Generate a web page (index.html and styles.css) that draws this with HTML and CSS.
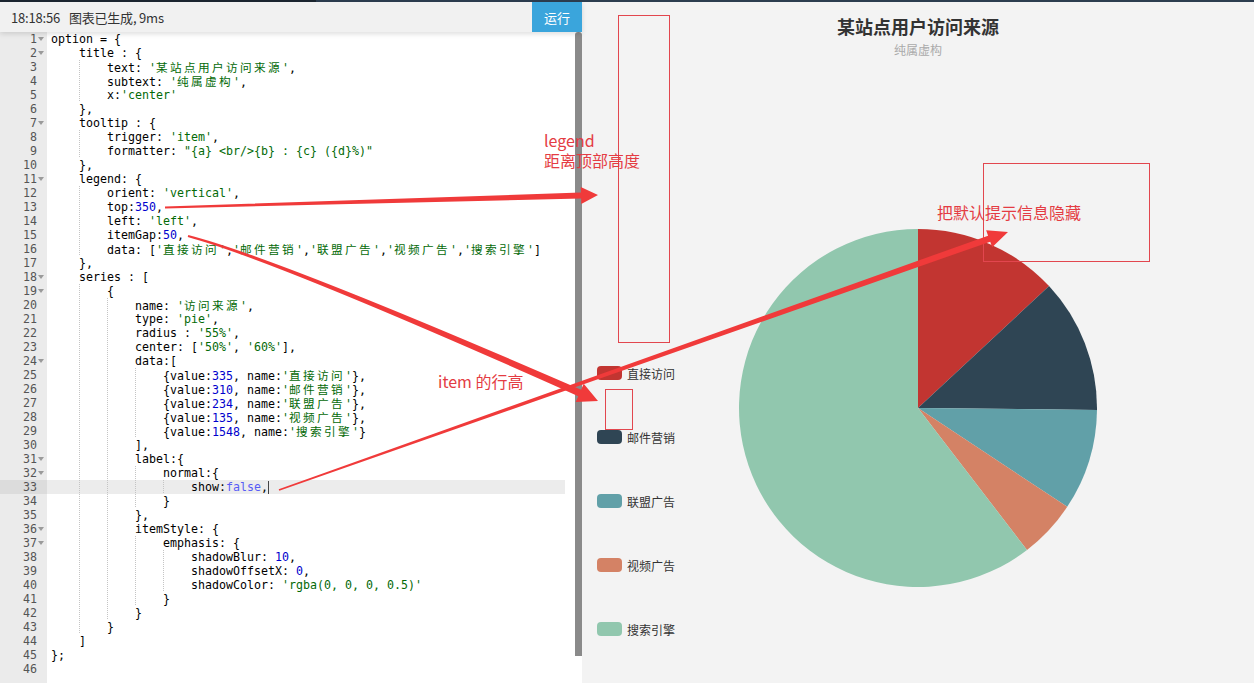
FILE: index.html
```html
<!DOCTYPE html>
<html lang="zh-CN">
<head>
<meta charset="utf-8">
<title>ECharts 饼图示例</title>
<link rel="stylesheet" href="styles.css">
</head>
<body>
<div class="page">
  <div class="topbar"></div>
  <div class="main">
    <section class="editor">
      <header class="ed-head">
        <span class="status"><span>18:18:56</span><span class="msg">图表已生成, 9ms</span></span>
        <button class="run">运行</button>
      </header>
      <div class="ed-body">
        <div class="gutter">
          <div class="gr"><span class="num">1</span><span class="fold on"></span></div>
          <div class="gr"><span class="num">2</span><span class="fold on"></span></div>
          <div class="gr"><span class="num">3</span><span class="fold"></span></div>
          <div class="gr"><span class="num">4</span><span class="fold"></span></div>
          <div class="gr"><span class="num">5</span><span class="fold"></span></div>
          <div class="gr"><span class="num">6</span><span class="fold"></span></div>
          <div class="gr"><span class="num">7</span><span class="fold on"></span></div>
          <div class="gr"><span class="num">8</span><span class="fold"></span></div>
          <div class="gr"><span class="num">9</span><span class="fold"></span></div>
          <div class="gr"><span class="num">10</span><span class="fold"></span></div>
          <div class="gr"><span class="num">11</span><span class="fold on"></span></div>
          <div class="gr"><span class="num">12</span><span class="fold"></span></div>
          <div class="gr"><span class="num">13</span><span class="fold"></span></div>
          <div class="gr"><span class="num">14</span><span class="fold"></span></div>
          <div class="gr"><span class="num">15</span><span class="fold"></span></div>
          <div class="gr"><span class="num">16</span><span class="fold"></span></div>
          <div class="gr"><span class="num">17</span><span class="fold"></span></div>
          <div class="gr"><span class="num">18</span><span class="fold on"></span></div>
          <div class="gr"><span class="num">19</span><span class="fold on"></span></div>
          <div class="gr"><span class="num">20</span><span class="fold"></span></div>
          <div class="gr"><span class="num">21</span><span class="fold"></span></div>
          <div class="gr"><span class="num">22</span><span class="fold"></span></div>
          <div class="gr"><span class="num">23</span><span class="fold"></span></div>
          <div class="gr"><span class="num">24</span><span class="fold on"></span></div>
          <div class="gr"><span class="num">25</span><span class="fold"></span></div>
          <div class="gr"><span class="num">26</span><span class="fold"></span></div>
          <div class="gr"><span class="num">27</span><span class="fold"></span></div>
          <div class="gr"><span class="num">28</span><span class="fold"></span></div>
          <div class="gr"><span class="num">29</span><span class="fold"></span></div>
          <div class="gr"><span class="num">30</span><span class="fold"></span></div>
          <div class="gr"><span class="num">31</span><span class="fold on"></span></div>
          <div class="gr"><span class="num">32</span><span class="fold on"></span></div>
          <div class="gr active"><span class="num">33</span><span class="fold"></span></div>
          <div class="gr"><span class="num">34</span><span class="fold"></span></div>
          <div class="gr"><span class="num">35</span><span class="fold"></span></div>
          <div class="gr"><span class="num">36</span><span class="fold on"></span></div>
          <div class="gr"><span class="num">37</span><span class="fold on"></span></div>
          <div class="gr"><span class="num">38</span><span class="fold"></span></div>
          <div class="gr"><span class="num">39</span><span class="fold"></span></div>
          <div class="gr"><span class="num">40</span><span class="fold"></span></div>
          <div class="gr"><span class="num">41</span><span class="fold"></span></div>
          <div class="gr"><span class="num">42</span><span class="fold"></span></div>
          <div class="gr"><span class="num">43</span><span class="fold"></span></div>
          <div class="gr"><span class="num">44</span><span class="fold"></span></div>
          <div class="gr"><span class="num">45</span><span class="fold"></span></div>
          <div class="gr"><span class="num">46</span><span class="fold"></span></div>
        </div>
        <div class="code">
          <div class="ln"><span class="t">option = {</span></div>
          <div class="ln"><i></i><span class="t">title : {</span></div>
          <div class="ln"><i></i><i class="g"></i><span class="t">text: <span class="s">'<span class="c">某站点用户访问来源</span>'</span>,</span></div>
          <div class="ln"><i></i><i class="g"></i><span class="t">subtext: <span class="s">'<span class="c">纯属虚构</span>'</span>,</span></div>
          <div class="ln"><i></i><i class="g"></i><span class="t">x:<span class="s">'center'</span></span></div>
          <div class="ln"><i></i><span class="t">},</span></div>
          <div class="ln"><i></i><span class="t">tooltip : {</span></div>
          <div class="ln"><i></i><i class="g"></i><span class="t">trigger: <span class="s">'item'</span>,</span></div>
          <div class="ln"><i></i><i class="g"></i><span class="t">formatter: <span class="s">"{a} &lt;br/&gt;{b} : {c} ({d}%)"</span></span></div>
          <div class="ln"><i></i><span class="t">},</span></div>
          <div class="ln"><i></i><span class="t">legend: {</span></div>
          <div class="ln"><i></i><i class="g"></i><span class="t">orient: <span class="s">'vertical'</span>,</span></div>
          <div class="ln"><i></i><i class="g"></i><span class="t">top:<span class="n">350</span>,</span></div>
          <div class="ln"><i></i><i class="g"></i><span class="t">left: <span class="s">'left'</span>,</span></div>
          <div class="ln"><i></i><i class="g"></i><span class="t">itemGap:<span class="n">50</span>,</span></div>
          <div class="ln"><i></i><i class="g"></i><span class="t">data: [<span class="s">'<span class="c">直接访问</span>'</span>,<span class="s">'<span class="c">邮件营销</span>'</span>,<span class="s">'<span class="c">联盟广告</span>'</span>,<span class="s">'<span class="c">视频广告</span>'</span>,<span class="s">'<span class="c">搜索引擎</span>'</span>]</span></div>
          <div class="ln"><i></i><span class="t">},</span></div>
          <div class="ln"><i></i><span class="t">series : [</span></div>
          <div class="ln"><i></i><i class="g"></i><span class="t">{</span></div>
          <div class="ln"><i></i><i class="g"></i><i class="g"></i><span class="t">name: <span class="s">'<span class="c">访问来源</span>'</span>,</span></div>
          <div class="ln"><i></i><i class="g"></i><i class="g"></i><span class="t">type: <span class="s">'pie'</span>,</span></div>
          <div class="ln"><i></i><i class="g"></i><i class="g"></i><span class="t">radius : <span class="s">'55%'</span>,</span></div>
          <div class="ln"><i></i><i class="g"></i><i class="g"></i><span class="t">center: [<span class="s">'50%'</span>, <span class="s">'60%'</span>],</span></div>
          <div class="ln"><i></i><i class="g"></i><i class="g"></i><span class="t">data:[</span></div>
          <div class="ln"><i></i><i class="g"></i><i class="g"></i><i class="g"></i><span class="t">{value:<span class="n">335</span>, name:<span class="s">'<span class="c">直接访问</span>'</span>},</span></div>
          <div class="ln"><i></i><i class="g"></i><i class="g"></i><i class="g"></i><span class="t">{value:<span class="n">310</span>, name:<span class="s">'<span class="c">邮件营销</span>'</span>},</span></div>
          <div class="ln"><i></i><i class="g"></i><i class="g"></i><i class="g"></i><span class="t">{value:<span class="n">234</span>, name:<span class="s">'<span class="c">联盟广告</span>'</span>},</span></div>
          <div class="ln"><i></i><i class="g"></i><i class="g"></i><i class="g"></i><span class="t">{value:<span class="n">135</span>, name:<span class="s">'<span class="c">视频广告</span>'</span>},</span></div>
          <div class="ln"><i></i><i class="g"></i><i class="g"></i><i class="g"></i><span class="t">{value:<span class="n">1548</span>, name:<span class="s">'<span class="c">搜索引擎</span>'</span>}</span></div>
          <div class="ln"><i></i><i class="g"></i><i class="g"></i><span class="t">],</span></div>
          <div class="ln"><i></i><i class="g"></i><i class="g"></i><span class="t">label:{</span></div>
          <div class="ln"><i></i><i class="g"></i><i class="g"></i><i class="g"></i><span class="t">normal:{</span></div>
          <div class="ln active"><i></i><i class="g"></i><i class="g"></i><i class="g"></i><i class="g"></i><span class="t">show:<span class="b">false</span>,</span><span class="cursor"></span></div>
          <div class="ln"><i></i><i class="g"></i><i class="g"></i><i class="g"></i><span class="t">}</span></div>
          <div class="ln"><i></i><i class="g"></i><i class="g"></i><span class="t">},</span></div>
          <div class="ln"><i></i><i class="g"></i><i class="g"></i><span class="t">itemStyle: {</span></div>
          <div class="ln"><i></i><i class="g"></i><i class="g"></i><i class="g"></i><span class="t">emphasis: {</span></div>
          <div class="ln"><i></i><i class="g"></i><i class="g"></i><i class="g"></i><i class="g"></i><span class="t">shadowBlur: <span class="n">10</span>,</span></div>
          <div class="ln"><i></i><i class="g"></i><i class="g"></i><i class="g"></i><i class="g"></i><span class="t">shadowOffsetX: <span class="n">0</span>,</span></div>
          <div class="ln"><i></i><i class="g"></i><i class="g"></i><i class="g"></i><i class="g"></i><span class="t">shadowColor: <span class="s">'rgba(0, 0, 0, 0.5)'</span></span></div>
          <div class="ln"><i></i><i class="g"></i><i class="g"></i><i class="g"></i><span class="t">}</span></div>
          <div class="ln"><i></i><i class="g"></i><i class="g"></i><span class="t">}</span></div>
          <div class="ln"><i></i><i class="g"></i><span class="t">}</span></div>
          <div class="ln"><i></i><span class="t">]</span></div>
          <div class="ln"><span class="t">};</span></div>
          <div class="ln"><span class="t"></span></div>
        </div>
        <div class="vscroll"><div class="thumb"></div></div>
      </div>
    </section>

    <section class="chart">
      <svg class="pie" viewBox="0 0 672 681" width="672" height="681">
        <path d="M336 406 L336 227 A179 179 0 0 1 467.06 284.08 Z" fill="#c23531"/>
        <path d="M336 406 L467.06 284.08 A179 179 0 0 1 514.99 407.97 Z" fill="#2f4554"/>
        <path d="M336 406 L514.99 407.97 A179 179 0 0 1 485.25 504.84 Z" fill="#61a0a8"/>
        <path d="M336 406 L485.25 504.84 A179 179 0 0 1 445.01 547.98 Z" fill="#d48265"/>
        <path d="M336 406 L445.01 547.98 A179 179 0 1 1 336 227 Z" fill="#91c7ae"/>
      </svg>
      <div class="chart-head">
        <div class="chart-title">某站点用户访问来源</div>
        <div class="chart-sub">纯属虚构</div>
      </div>
      <ul class="legend">
        <li><span class="swatch sw1"></span>直接访问</li>
        <li><span class="swatch sw2"></span>邮件营销</li>
        <li><span class="swatch sw3"></span>联盟广告</li>
        <li><span class="swatch sw4"></span>视频广告</li>
        <li><span class="swatch sw5"></span>搜索引擎</li>
      </ul>
    </section>
  </div>

  <svg class="annot" viewBox="0 0 1254 683" width="1254" height="683">
    <g fill="none" stroke="#e2464e" stroke-width="1">
      <rect x="618.5" y="15.5" width="51" height="327"/>
      <rect x="605.5" y="389.5" width="27" height="40"/>
      <rect x="983.5" y="163.5" width="166" height="98"/>
    </g>
    <g fill="#f03a3a">
      <polygon points="164.97,206.5 580.92,192.49 580.76,186.99 598,195 581.26,203.99 581.1,198.49 165.03,208.5"/>
      <path d="M188.26 235.03 Q278.63 258.31 581.11 389.74 L583.73 383.79 L598 401 L575.67 402.09 L578.29 396.14 Q277.37 261.69 187.74 236.97 Z"/>
      <polygon points="278.7,489.15 988.08,235.65 986.15,230.19 1008,232 992.15,247.15 990.22,241.69 279.3,490.85"/>
    </g>
  </svg>
  <div class="note n-legend">legend<br>距离顶部高度</div>
  <div class="note n-item">item 的行高</div>
  <div class="note n-tip">把默认提示信息隐藏</div>
</div>
</body>
</html>
```

FILE: styles.css
```css
* { box-sizing: border-box; }
html, body { margin: 0; padding: 0; }
body {
  width: 1254px;
  height: 683px;
  overflow: hidden;
  background: #f3f3f3;
  font-family: "Noto Sans CJK SC", "Noto Sans", sans-serif;
}
.page {
  position: relative;
  width: 1254px;
  height: 683px;
  display: flex;
  flex-direction: column;
}
.topbar {
  flex: none;
  height: 2px;
  background: linear-gradient(to right, #1c2630 0, #1c2630 316px, #2c3d4f 316px);
}
.main {
  flex: 1;
  display: flex;
  min-height: 0;
}

/* ---------- editor ---------- */
.editor {
  width: 582px;
  flex: none;
  display: flex;
  flex-direction: column;
  background: #fff;
}
.ed-head {
  flex: none;
  height: 30px;
  display: flex;
  align-items: center;
  padding-left: 11px;
  background: #f1f1f1;
  position: relative;
  z-index: 2;
  box-shadow: 0 2px 5px rgba(0, 0, 0, 0.13);
}
.status {
  font-size: 13px;
  color: #333;
  letter-spacing: -0.2px;
}
.status .msg { margin-left: 9px; }
.run {
  margin-left: auto;
  width: 50px;
  height: 30px;
  padding: 0;
  border: 0;
  background: #3aa5dc;
  color: #fff;
  font: 13px "Noto Sans CJK SC", sans-serif;
}
.ed-body {
  flex: 1;
  display: flex;
  min-height: 0;
}
.gutter {
  width: 47px;
  flex: none;
  background: #ebebeb;
}
.gr {
  height: 14px;
  display: flex;
  align-items: center;
  font: 11.63px/14px "DejaVu Sans Mono", monospace;
  color: #555;
}
.gr.active { background: #dcdcdc; }
.gr .num {
  width: 37px;
  text-align: right;
}
.gr .fold {
  width: 10px;
  height: 14px;
  display: flex;
  align-items: center;
}
.gr .fold.on::before {
  content: "";
  display: block;
  margin-left: 1px;
  margin-top: -1px;
  border-left: 3px solid transparent;
  border-right: 3px solid transparent;
  border-top: 4px solid #9a9a9a;
}
.code {
  flex: 1;
  min-width: 0;
}
.ln {
  height: 14px;
  margin-right: 10px;
  padding-left: 4px;
  display: flex;
  align-items: stretch;
  font: 11.63px/14px "DejaVu Sans Mono", "Noto Sans CJK SC", monospace;
  color: #000;
  white-space: pre;
}
.ln.active { background: #ececec; }
.ln i {
  flex: none;
  width: 28px;
  height: 14px;
}
.ln i.g {
  background: linear-gradient(#c4c4c4 50%, transparent 50%) 0 0 / 1px 2px repeat-y;
}
.ln .t { display: block; }
.s { color: #036a07; }
.n { color: #0000cd; }
.b { color: #585cf6; }
.c { letter-spacing: 2.37px; font-family: "Noto Sans CJK SC", sans-serif; font-size: 11.63px; }
.cursor {
  display: block;
  width: 1px;
  height: 13px;
  margin-top: 1px;
  background: #444;
}
.vscroll {
  width: 7px;
  flex: none;
}
.thumb {
  height: 624px;
  background: #8a8a8a;
  border-radius: 3px 3px 0 0;
}

/* ---------- chart ---------- */
.chart {
  flex: 1;
  position: relative;
  background: #f3f3f3;
  display: flex;
  flex-direction: column;
}
.pie {
  position: absolute;
  left: 0;
  top: 0;
}
.chart-head {
  position: relative;
  padding-top: 13px;
  text-align: center;
}
.chart-title {
  font-size: 18px;
  line-height: 22px;
  font-weight: 700;
  color: #333;
}
.chart-sub {
  margin-top: 5px;
  font-size: 12px;
  line-height: 16px;
  color: #aaa;
}
.legend {
  position: relative;
  list-style: none;
  margin: 308px 0 0;
  padding: 0 0 0 15px;
  display: flex;
  flex-direction: column;
  gap: 50px;
}
.legend li {
  height: 14px;
  display: flex;
  align-items: center;
  font-size: 12px;
  color: #333;
}
.swatch {
  width: 25px;
  height: 14px;
  border-radius: 4px;
  margin-right: 5px;
}
.sw1 { background: #c23531; }
.sw2 { background: #2f4554; }
.sw3 { background: #61a0a8; }
.sw4 { background: #d48265; }
.sw5 { background: #91c7ae; }

/* ---------- annotations ---------- */
.annot {
  position: absolute;
  left: 0;
  top: 0;
  pointer-events: none;
  z-index: 5;
}
.note {
  position: absolute;
  z-index: 6;
  font-size: 16px;
  line-height: 20px;
  color: #e43c43;
  white-space: nowrap;
}
.n-legend { left: 544px; top: 130px; }
.n-item { left: 438px; top: 371px; }
.n-tip { left: 937px; top: 202px; }
```
